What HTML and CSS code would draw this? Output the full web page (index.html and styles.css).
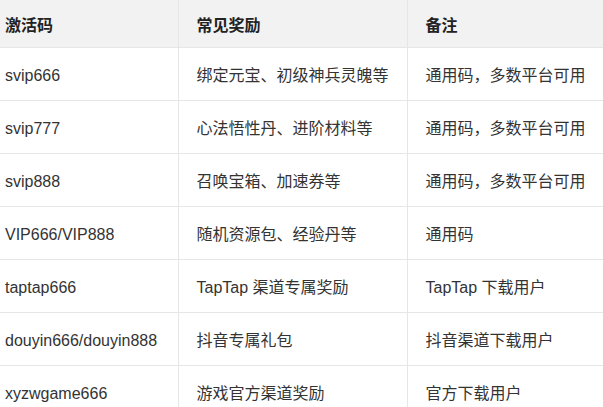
FILE: index.html
```html
<!DOCTYPE html>
<html lang="zh-CN">
<head>
<meta charset="utf-8">
<link rel="stylesheet" href="styles.css">
</head>
<body>
<table class="codes">
  <colgroup>
    <col class="c1"><col class="c2"><col class="c3">
  </colgroup>
  <thead>
    <tr><th>激活码</th><th>常见奖励</th><th>备注</th></tr>
  </thead>
  <tbody>
    <tr><td>svip666</td><td>绑定元宝、初级神兵灵魄等</td><td>通用码，多数平台可用</td></tr>
    <tr><td>svip777</td><td>心法悟性丹、进阶材料等</td><td>通用码，多数平台可用</td></tr>
    <tr><td>svip888</td><td>召唤宝箱、加速券等</td><td>通用码，多数平台可用</td></tr>
    <tr><td>VIP666/VIP888</td><td>随机资源包、经验丹等</td><td>通用码</td></tr>
    <tr><td>taptap666</td><td>TapTap 渠道专属奖励</td><td>TapTap 下载用户</td></tr>
    <tr><td>douyin666/douyin888</td><td>抖音专属礼包</td><td>抖音渠道下载用户</td></tr>
    <tr><td>xyzwgame666</td><td>游戏官方渠道奖励</td><td>官方下载用户</td></tr>
  </tbody>
</table>
</body>
</html>
```
FILE: styles.css
```css
html, body {
  margin: 0;
  padding: 0;
  background: #fff;
  overflow: hidden;
}
body {
  font-family: "Liberation Sans", "Noto Sans CJK SC", sans-serif;
  font-size: 16px;
  color: #333;
}
.codes {
  border-collapse: collapse;
  table-layout: fixed;
  width: 603px;
}
.c1 { width: 178px; }
.c2 { width: 229px; }
.c3 { width: 196px; }
.codes th,
.codes td {
  border: 1px solid #e6e6e6;
  padding: 0 18px;
  text-align: left;
  vertical-align: middle;
  white-space: nowrap;
  overflow: hidden;
  line-height: 24px;
}
.codes th:first-child,
.codes td:first-child {
  border-left: 0;
  padding-left: 5px;
}
.codes th:last-child,
.codes td:last-child {
  border-right: 0;
  padding-right: 0;
}
.codes th {
  border-top: 0;
  height: 47px;
  background: #f2f2f2;
  color: #222;
  font-weight: 700;
  font-family: "Noto Sans CJK SC", sans-serif;
}
.codes td {
  height: 49px;
  padding-top: 3px;
}
```
